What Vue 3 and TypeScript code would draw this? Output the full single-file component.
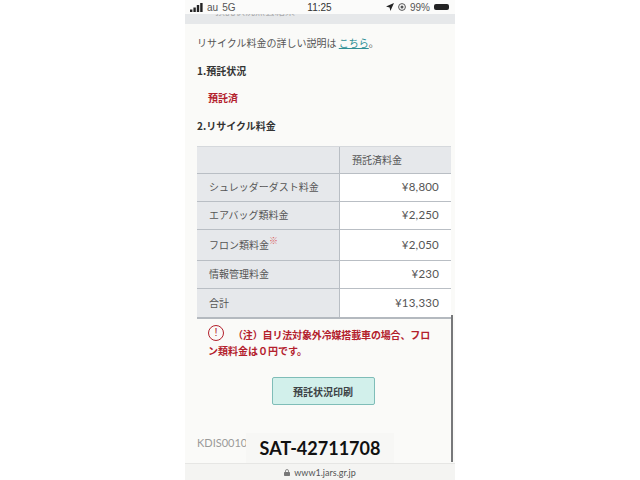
<script setup lang="ts">
const rows = [
  { name: 'シュレッダーダスト料金', price: '¥8,800', h: 28 },
  { name: 'エアバッグ類料金', price: '¥2,250', h: 28 },
  { name: 'フロン類料金', note: '※', price: '¥2,050', h: 31 },
  { name: '情報管理料金', price: '¥230', h: 28 },
  { name: '合計', price: '¥13,330', h: 28 },
]
</script>

<template>
  <div class="page">
    <div class="phone">
      <header class="status">
        <div class="status__left">
          <svg width="13" height="9" viewBox="0 0 13 9"><path d="M0 6.5h2.4V9H0zM3.4 4.5h2.4V9H3.4zM6.8 2h2.4v7H6.8zM10.2 0h2.4v9h-2.4z" fill="#222" /></svg>
          <span>au</span>
          <span>5G</span>
        </div>
        <div class="status__time">11:25</div>
        <div class="status__right">
          <svg width="8" height="8" viewBox="0 0 8 8"><path d="M8 0 0 3.6l3.6.8.8 3.6z" fill="#222" /></svg>
          <svg width="8" height="8" viewBox="0 0 8 8"><circle cx="4" cy="4" r="3.4" fill="none" stroke="#555" /><circle cx="4" cy="4" r="1.5" fill="#555" /></svg>
          <span>99%</span>
          <span class="battery" />
        </div>
      </header>
      <div class="band"><span>預託状況照会結果</span></div>

      <main class="body">
        <p class="intro">リサイクル料金の詳しい説明は <a class="intro__link">こちら</a>。</p>
        <h2 class="heading heading--first">1.預託状況</h2>
        <p class="state">預託済</p>
        <h2 class="heading heading--second">2.リサイクル料金</h2>

        <div class="table">
          <div class="row row--head">
            <div class="cell cell--name" />
            <div class="cell cell--head">預託済料金</div>
          </div>
          <div v-for="row in rows" :key="row.name" class="row" :style="{ height: row.h + 'px' }">
            <div class="cell cell--name">{{ row.name }}<span v-if="row.note" class="note">{{ row.note }}</span></div>
            <div class="cell cell--price">{{ row.price }}</div>
          </div>
        </div>

        <div class="caution">
          <span class="caution__icon">!</span>
          <span class="caution__first">（注）自リ法対象外冷媒搭載車の場合、フロ</span>
          <span class="caution__second">ン類料金は０円です。</span>
        </div>

        <div class="actions">
          <button class="print" type="button">預託状況印刷</button>
        </div>

        <div class="code">KDIS0010</div>
        <div class="scrollbar" />
      </main>

      <footer class="urlbar">
        <svg width="6" height="7" viewBox="0 0 6 7"><path d="M1.5 3V2a1.5 1.5 0 0 1 3 0v1" fill="none" stroke="#777" stroke-width=".8" /><rect y="3" width="6" height="4" rx=".7" fill="#777" /></svg>
        <span>www1.jars.gr.jp</span>
      </footer>

      <div class="stamp">SAT-42711708</div>
    </div>
  </div>
</template>

<style>
html,
body {
  margin: 0;
  background: #fff;
}
</style>

<style scoped>
.page {
  width: 640px;
  height: 480px;
  display: flex;
  justify-content: center;
  overflow: hidden;
  background: #fff;
  font-family: "Noto Sans CJK JP", "Noto Sans", sans-serif;
}

.phone {
  position: relative;
  width: 270px;
  height: 480px;
  display: flex;
  flex-direction: column;
  background: #fafaf8;
  color: #3c3f42;
}

.status {
  height: 14px;
  flex-shrink: 0;
  display: grid;
  grid-template-columns: 1fr auto 1fr;
  align-items: center;
  padding: 0 6px 0 5px;
  background: #fbfbfa;
  font-family: "Liberation Sans", sans-serif;
  font-size: 10px;
  color: #555;
}

.status__left,
.status__right {
  display: flex;
  align-items: center;
}

.status__left {
  gap: 4px;
}

.status__time {
  font-size: 10px;
  color: #333;
}

.status__right {
  justify-content: flex-end;
  gap: 4px;
}

.battery {
  width: 15px;
  height: 6px;
  border-radius: 2px;
  background: #222;
}

.band {
  height: 10px;
  flex-shrink: 0;
  overflow: hidden;
  padding-left: 30px;
  background: #e6e8ea;
  font-size: 10px;
  line-height: 10px;
  color: #aaa;
}

.band span {
  display: block;
  margin-top: -8px;
}

.body {
  position: relative;
  flex: 1;
  min-height: 0;
  padding: 0 4px 0 12px;
}

.intro {
  margin: 11px 0 0;
  font-size: 10px;
  line-height: 16px;
  color: #555;
}

.intro__link {
  color: #2f8f95;
  text-decoration: underline;
}

.heading {
  margin: 0;
  font-size: 10px;
  font-weight: 700;
  line-height: 16px;
  color: #333;
}

.heading--first {
  margin-top: 12px;
}

.heading--second {
  margin-top: 12px;
}

.state {
  margin: 11px 0 0 11px;
  font-size: 10px;
  font-weight: 700;
  line-height: 16px;
  color: #b3202c;
}

.table {
  margin-top: 12px;
  border-top: 1px solid #d5d8dc;
  border-bottom: 2px solid #b4b9bf;
}

.row {
  display: grid;
  grid-template-columns: 143px 111px;
  height: 28px;
  box-sizing: border-box;
  border-bottom: 1px solid #b9bec4;
}

.row:last-child {
  border-bottom: 0;
}

.row--head {
  height: 27px;
}

.cell {
  display: flex;
  align-items: center;
  box-sizing: border-box;
  padding-bottom: 2px;
  font-size: 10px;
}

.cell--name {
  padding-left: 12px;
  background: #e6e8eb;
  border-right: 1px solid #b9bec4;
  color: #555;
}

.cell--head {
  padding-left: 12px;
  background: #e6e8eb;
  color: #555;
}

.cell--price {
  justify-content: flex-end;
  padding-right: 12px;
  background: #fff;
  font-family: "Lato", sans-serif;
  font-size: 11.5px;
  letter-spacing: .2px;
  color: #555;
}

.note {
  align-self: flex-start;
  margin-top: 6px;
  font-size: 9px;
  line-height: 10px;
  color: #d9605f;
}

.caution {
  position: relative;
  margin: 5px 0 0;
  padding-left: 11px;
  font-size: 10px;
  font-weight: 700;
  line-height: 16px;
  color: #b3202c;
}

.caution__first {
  display: block;
  padding-left: 25px;
  padding-top: 3px;
  white-space: nowrap;
  letter-spacing: -.15px;
}

.caution__second {
  display: block;
}

.caution__icon {
  position: absolute;
  left: 11px;
  top: 1px;
  width: 16px;
  height: 16px;
  box-sizing: border-box;
  border: 1.5px solid #b3202c;
  border-radius: 50%;
  font-family: "Liberation Sans", sans-serif;
  font-size: 11px;
  font-weight: 400;
  line-height: 13px;
  text-align: center;
}

.actions {
  display: flex;
  justify-content: center;
  margin-top: 18px;
  padding-right: 2px;
}

.print {
  width: 103px;
  height: 28px;
  padding: 0;
  border: 1px solid #7fbdb8;
  border-radius: 2px;
  background: #d2f0eb;
  font-family: inherit;
  font-size: 10px;
  font-weight: 700;
  color: #3c4245;
}

.code {
  margin-top: 31px;
  font-family: "Lato", sans-serif;
  font-size: 11px;
  line-height: 14px;
  color: #9a9a9a;
}

.scrollbar {
  position: absolute;
  right: 2px;
  top: 291px;
  bottom: 1px;
  width: 2px;
  background: #77787a;
}

.urlbar {
  height: 17px;
  flex-shrink: 0;
  display: flex;
  align-items: center;
  justify-content: center;
  gap: 4px;
  background: #f4f4f2;
  border-top: 1px solid #e6e6e4;
  box-sizing: border-box;
  font-family: "Lato", sans-serif;
  font-size: 9px;
  color: #555;
}

.stamp {
  position: absolute;
  left: 61px;
  top: 433px;
  width: 148px;
  height: 30px;
  background: #f7f7f5;
  font-family: "Lato", sans-serif;
  font-size: 18px;
  font-weight: 700;
  line-height: 30px;
  text-align: center;
  color: #111;
}
</style>
